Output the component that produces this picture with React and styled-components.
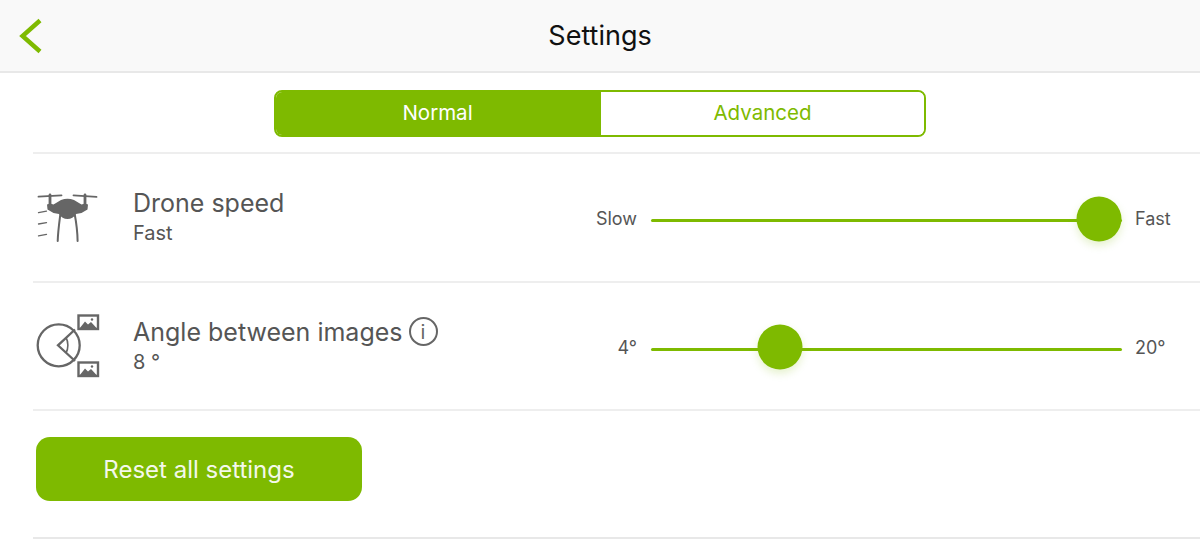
import React from 'react';
import styled, { createGlobalStyle } from 'styled-components';

const GREEN = '#7eba00';
const GREY = '#666666';

const GlobalStyle = createGlobalStyle`
  html, body {
    margin: 0;
    background: #fff;
    font-family: Inter, "Noto Sans", sans-serif;
  }
`;

const DroneIcon = () => (
  <IconSvg viewBox="13 12 70 70">
    <g stroke={GREY} fill="none" strokeLinecap="round">
      <path d="M18.5 25.7 41.5 24.4M53.5 24.4 76.5 25.9" strokeWidth="1.8" />
      <path d="M30 24v10M65 24v10" strokeWidth="2.8" />
      <path d="M40.5 42C39.5 50 38 60 37.7 70M54.5 42C56 50 57.5 60 57.6 70" strokeWidth="2" />
      <path d="M18.5 41.7 26.5 40.2M18.5 53 26.5 51.6M18.5 64.8 26.5 63.4" strokeWidth="1.3" />
    </g>
    <path
      fill={GREY}
      d="M27 33.5 30 32.5 33.5 33.5 41 29Q47.5 26.5 54 29L61.5 33.5 65 32.5 68 33.5 67.5 38.5 61.5 42 56 43C54 46.5 51 48 47.5 48C44 48 41 46.5 39 43L33.5 42 27.5 38.5Z"
    />
  </IconSvg>
);

const Picture = ({ y }) => (
  <g transform={`translate(57.5 ${y})`}>
    <rect x="1" y="1" width="19.5" height="13.5" fill="#fff" stroke={GREY} strokeWidth="2.4" />
    <path d="M2 14 7.5 7 10.5 10 13.5 7.5 19.5 14Z" fill={GREY} />
    <circle cx="14.5" cy="5" r="1.2" fill={GREY} />
  </g>
);

const AngleIcon = () => (
  <IconSvg viewBox="13 11 70 70">
    <g stroke={GREY} fill="none" strokeWidth="2.3">
      <circle cx="38.7" cy="45.3" r="21" />
      <path d="M55 29.5 38 45.3 55 61" />
      <path d="M46 37.5C48.5 42 48.5 48.5 46 53" strokeWidth="1.6" />
    </g>
    <Picture y={14.5} />
    <Picture y={61.5} />
  </IconSvg>
);

const App = () => (
  <Page>
    <GlobalStyle />
    <Header>
      <BackButton aria-label="Back">
        <svg width="24" height="36" viewBox="0 0 24 36">
          <path d="M22 2.5 4.5 18 22 33.5" fill="none" stroke={GREEN} strokeWidth="4.4" />
        </svg>
      </BackButton>
      <Title>Settings</Title>
    </Header>
    <TabBar>
      <Tabs>
        <Tab $active>Normal</Tab>
        <Tab>Advanced</Tab>
      </Tabs>
    </TabBar>
    <List>
      <Row $height={129}>
        <IconCell><DroneIcon /></IconCell>
        <TextCell>
          <RowTitle>Drone speed</RowTitle>
          <RowValue>Fast</RowValue>
        </TextCell>
        <SliderCell>
          <SliderLabel $side="left">Slow</SliderLabel>
          <Track><Thumb $at={95.1} /></Track>
          <SliderLabel $side="right">Fast</SliderLabel>
        </SliderCell>
      </Row>
      <Row $height={128}>
        <IconCell><AngleIcon /></IconCell>
        <TextCell>
          <RowTitle>
            Angle between images
            <InfoBadge>i</InfoBadge>
          </RowTitle>
          <RowValue>8 °</RowValue>
        </TextCell>
        <SliderCell>
          <SliderLabel $side="left">4°</SliderLabel>
          <Track><Thumb $at={27.4} /></Track>
          <SliderLabel $side="right">20°</SliderLabel>
        </SliderCell>
      </Row>
      <ResetRow>
        <ResetButton>Reset all settings</ResetButton>
      </ResetRow>
    </List>
  </Page>
);

/* CSS */
const Page = styled.div`
  width: 1200px;
  height: 557px;
  overflow: hidden;
  background: #fff;
`;
const Header = styled.header`
  height: 71px;
  display: flex;
  align-items: center;
  justify-content: center;
  position: relative;
  background: #f9f9f9;
  border-bottom: 2px solid #e8e8e8;
`;
const BackButton = styled.button`
  position: absolute;
  left: 18px;
  top: 18px;
  padding: 0;
  border: 0;
  background: none;
  line-height: 0;
`;
const Title = styled.h1`
  margin: 0;
  font-size: 27px;
  font-weight: 400;
  color: #111;
`;
const TabBar = styled.div`
  display: flex;
  justify-content: center;
  padding-top: 17px;
  padding-bottom: 15px;
`;
const Tabs = styled.div`
  width: 652px;
  height: 47px;
  box-sizing: border-box;
  display: flex;
  border: 2px solid ${GREEN};
  border-radius: 8px;
  overflow: hidden;
`;
const Tab = styled.div`
  flex: 1 1 0;
  box-sizing: border-box;
  display: flex;
  align-items: center;
  justify-content: center;
  padding-bottom: 2px;
  padding-right: ${({ $active }) => ($active ? '2px' : '0')};
  font-size: 20.5px;
  color: ${({ $active }) => ($active ? '#fff' : GREEN)};
  background: ${({ $active }) => ($active ? GREEN : '#fff')};
`;
const List = styled.div`
  margin-left: 33px;
`;
const Row = styled.div`
  height: ${({ $height }) => $height}px;
  box-sizing: border-box;
  display: flex;
  align-items: center;
  border-top: 2px solid #eeeeee;
`;
const IconCell = styled.div`
  width: 100px;
  display: flex;
  align-items: center;
`;
const IconSvg = styled.svg`
  display: block;
  width: 70px;
  height: 70px;
`;
const TextCell = styled.div`
  width: 448px;
  color: #555;
`;
const RowTitle = styled.div`
  display: flex;
  align-items: center;
  height: 30px;
  font-size: 25px;
  line-height: 30px;
`;
const RowValue = styled.div`
  margin-top: 1px;
  font-size: 20px;
  line-height: 28px;
`;
const InfoBadge = styled.span`
  width: 29px;
  height: 29px;
  margin-left: 6px;
  box-sizing: border-box;
  display: flex;
  align-items: center;
  justify-content: center;
  border: 2px solid ${GREY};
  border-radius: 50%;
  font-size: 20px;
  color: ${GREY};
`;
const SliderCell = styled.div`
  flex: 1;
  display: flex;
  align-items: center;
  margin-top: 6px;
`;
const SliderLabel = styled.span`
  width: ${({ $side }) => ($side === 'left' ? '56px' : 'auto')};
  margin-left: ${({ $side }) => ($side === 'left' ? '0' : '13px')};
  margin-right: ${({ $side }) => ($side === 'left' ? '14px' : '0')};
  margin-bottom: 4px;
  text-align: ${({ $side }) => ($side === 'left' ? 'right' : 'left')};
  font-size: 18px;
  color: #555;
`;
const Track = styled.div`
  width: 471px;
  height: 3px;
  border-radius: 2px;
  background: ${GREEN};
  position: relative;
`;
const Thumb = styled.div`
  position: absolute;
  left: ${({ $at }) => $at}%;
  top: calc(50% - 2px);
  width: 45px;
  height: 45px;
  border-radius: 50%;
  transform: translate(-50%, -50%);
  background: ${GREEN};
  box-shadow: 0 4px 8px rgba(126, 186, 0, 0.2);
`;
const ResetRow = styled.div`
  height: 130px;
  box-sizing: border-box;
  padding: 26px 0 0 3px;
  border-top: 2px solid #eeeeee;
  border-bottom: 2px solid #e8e8e8;
`;
const ResetButton = styled.button`
  display: block;
  width: 326px;
  height: 64px;
  border: 0;
  border-radius: 14px;
  background: ${GREEN};
  color: #f4f8ea;
  font-family: inherit;
  font-size: 24px;
`;
/* end CSS */

export default App;
